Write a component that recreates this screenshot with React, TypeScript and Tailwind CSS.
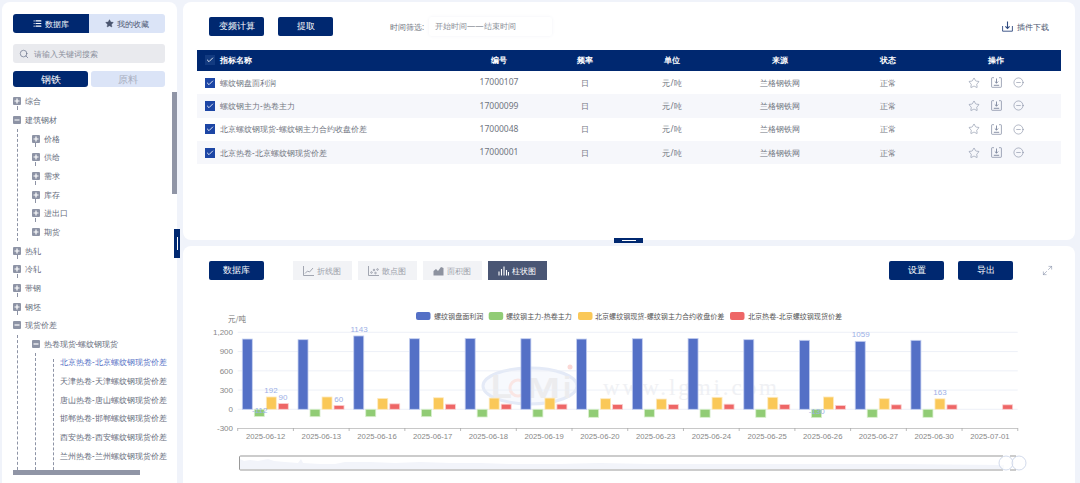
import React from "react";
import { Star, CircleMinus, Search, Check, List, Maximize2 } from "lucide-react";

const FONT = "[font-family:'Noto_Sans_CJK_SC','Noto_Sans',sans-serif]";

function Toggle({ open }: { open?: boolean }) {
  return (
    <svg width="8" height="8" viewBox="0 0 8 8" className="shrink-0">
      <rect width="8" height="8" rx="1" fill="#8d93a5" />
      <path d={open ? "M1.5 4H6.5" : "M1.5 4H6.5M4 1.5V6.5"} stroke="#fff" strokeWidth="1.2" />
    </svg>
  );
}

function Node({ label, open, dash = true }: { label: string; open?: boolean; dash?: boolean }) {
  return (
    <div className="relative flex h-[18.67px] items-center gap-[4px]">
      <Toggle open={open} />
      <span className="whitespace-nowrap">{label}</span>
      {dash && !open && (
        <span className="absolute left-[3.5px] top-[14px] h-[4px] border-l border-dashed border-[#8d93a5]" />
      )}
    </div>
  );
}

const leaves = [
  "北京热卷-北京螺纹钢现货价差",
  "天津热卷-天津螺纹钢现货价差",
  "唐山热卷-唐山螺纹钢现货价差",
  "邯郸热卷-邯郸螺纹钢现货价差",
  "西安热卷-西安螺纹钢现货价差",
  "兰州热卷-兰州螺纹钢现货价差",
];

function Sidebar() {
  return (
    <aside className="relative mt-[2px] ml-[2px] flex h-[481px] w-[175px] shrink-0 flex-col overflow-hidden rounded-t-lg bg-white px-[11px] pt-[12px]">
      <div className="flex h-[19px] w-[152px] shrink-0 overflow-hidden rounded-[3px] text-[8px]">
        <div className="flex w-[76px] items-center justify-center gap-[3px] bg-[#002870] text-white">
          <List size={9} strokeWidth={3} />
          数据库
        </div>
        <div className="flex w-[76px] items-center justify-center gap-[3px] bg-[#dbe4f7] text-[#4b5670]">
          <Star size={9} fill="#4b5670" strokeWidth={1} />
          我的收藏
        </div>
      </div>
      <div className="mt-[11px] flex h-[19px] w-[152px] shrink-0 items-center gap-[5px] rounded-[3px] bg-[#e9eaee] pl-[6px] text-[8px] text-[#8a8f9c]">
        <Search size={10} color="#5b6580" strokeWidth={1.5} />
        请输入关键词搜索
      </div>
      <div className="mt-[8px] flex h-[16px] w-[152px] shrink-0 justify-between text-[10px]">
        <div className="flex w-[75px] items-center justify-center rounded-[3px] bg-[#002870] text-white">钢铁</div>
        <div className="flex w-[74px] items-center justify-center rounded-[3px] bg-[#dbe4f7] text-[#a9afbf]">原料</div>
      </div>
      <div className="mt-[5px] w-[159px] overflow-hidden text-[8px] leading-none text-[#666c7c]">
        <Node label="综合" />
        <Node label="建筑钢材" open />
        <div className="ml-[4px] border-l border-dashed border-[#8d93a5] pl-[13.5px]">
          {["价格", "供给", "需求", "库存", "进出口"].map((t) => (
            <Node key={t} label={t} />
          ))}
          <Node label="期货" dash={false} />
        </div>
        <Node label="热轧" />
        <Node label="冷轧" />
        <Node label="带钢" />
        <Node label="钢坯" />
        <Node label="现货价差" open />
        <div className="ml-[4px] border-l border-dashed border-[#8d93a5] pl-[13.5px]">
          <Node label="热卷现货-螺纹钢现货" open />
          <div className="ml-[3.5px] border-l border-dashed border-[#8d93a5] pb-[10px] pl-[16.5px]">
            <div className="relative pl-[7.5px] text-[8.15px]">
              <span className="absolute top-[6px] bottom-[-10px] left-0 border-l border-dashed border-[#8d93a5]" />
              {leaves.map((t, i) => (
                <div
                  key={t}
                  className={`flex h-[18.67px] items-center whitespace-nowrap ${i === 0 ? "text-[#5470c6]" : ""}`}
                >
                  {t}
                </div>
              ))}
            </div>
          </div>
        </div>
      </div>
      <div className="absolute top-[90px] right-0 h-[102px] w-[5px] bg-[#9095a6]" />
      <div className="absolute top-[468px] left-[11px] h-[5px] w-[127px] bg-[#9095a6]" />
    </aside>
  );
}

function Btn({ children, w = "w-[55px]" }: { children: React.ReactNode; w?: string }) {
  return (
    <div className={`flex h-[19px] ${w} shrink-0 items-center justify-center rounded-[2px] bg-[#002870] text-[8.5px] text-white`}>
      {children}
    </div>
  );
}

function SaveIcon({ size = 11, color = "#7a849c" }: { size?: number; color?: string }) {
  return (
    <svg width={size} height={size} viewBox="0 0 11 11" fill="none" stroke={color} strokeWidth="0.7">
      <path d="M3 .7H1.2A.6.6 0 0 0 .6 1.3V9.7A.6.6 0 0 0 1.2 10.3H9.8A.6.6 0 0 0 10.4 9.7V1.3A.6.6 0 0 0 9.8 .7H8" />
      <path d="M5.5 1.5V6M3.8 4.5 5.5 6.2 7.2 4.5M2.8 8.3H8.2" strokeWidth="0.9" />
    </svg>
  );
}

function CheckBox({ head }: { head?: boolean }) {
  return (
    <div className={`flex h-[10px] w-[10px] shrink-0 items-center justify-center ${head ? "bg-[#123a80]" : "bg-[#1d46a5]"}`}>
      <Check size={8} color="#fff" strokeWidth={2.5} />
    </div>
  );
}

const GRID = "grid grid-cols-[260px_84px_88px_86px_130px_86px_130px] items-center";

const rows = [
  ["螺纹钢盘面利润", "17000107"],
  ["螺纹钢主力-热卷主力", "17000099"],
  ["北京螺纹钢现货-螺纹钢主力合约收盘价差", "17000048"],
  ["北京热卷-北京螺纹钢现货价差", "17000001"],
];

function SaveDownload() {
  return (
    <svg width="11" height="11" viewBox="0 0 11 11" fill="none" stroke="#2f4a80" strokeWidth="0.9">
      <path d="M.6 5V10.2H10.4V5" />
      <path d="M5.5 .5V7.5M3.4 5.4 5.5 7.5 7.6 5.4" strokeWidth="1.1" />
    </svg>
  );
}

function TopPanel() {
  return (
    <section className="h-[238px] shrink-0 rounded-lg bg-white px-[14px] pt-[15px]">
      <div className="flex h-[19px] items-center pl-[12px]">
        <Btn>变频计算</Btn>
        <div className="ml-[14px]"><Btn>提取</Btn></div>
        <span className="ml-[57px] w-[39px] text-[8px] whitespace-nowrap text-[#70757f]">时间筛选:</span>
        <div className="flex h-[19px] w-[123px] items-center rounded-[2px] pl-[6px] text-[8.3px] text-[#8b8f98] shadow-[0_0_3px_rgba(120,135,180,0.1)]">
          开始时间——结束时间
        </div>
        <div className="mr-[12px] ml-auto flex items-center gap-[4px] text-[8px] text-[#4b5670]">
          <SaveDownload />
          插件下载
        </div>
      </div>
      <div className={`${GRID} mt-[14px] h-[21px] bg-[#002870] text-center text-[8.2px] font-bold text-white`}>
        <div className="flex items-center gap-[5px] pl-[8px]">
          <CheckBox head />
          指标名称
        </div>
        <div>编号</div>
        <div>频率</div>
        <div>单位</div>
        <div>来源</div>
        <div>状态</div>
        <div>操作</div>
      </div>
      {rows.map(([name, id], i) => (
        <div
          key={id}
          className={`${GRID} h-[23.33px] text-center text-[8.2px] text-[#70757f] ${i % 2 === 1 ? "bg-[#f6f7fb]" : ""}`}
        >
          <div className="flex items-center gap-[5px] pl-[8px]">
            <CheckBox />
            {name}
          </div>
          <div className="text-[8.5px]">{id}</div>
          <div>日</div>
          <div>元/吨</div>
          <div>兰格钢铁网</div>
          <div>正常</div>
          <div className="flex items-center justify-center gap-[11px]">
            <Star size={12} color="#6b7690" strokeWidth={1} />
            <SaveIcon />
            <CircleMinus size={11} color="#5f6a85" strokeWidth={1} />
          </div>
        </div>
      ))}
    </section>
  );
}

function ChartIcon({ kind, color }: { kind: string; color: string }) {
  const common = { width: 11, height: 10, viewBox: "0 0 11 10", fill: "none", stroke: color, strokeWidth: 0.8 };
  if (kind === "line")
    return (
      <svg {...common}>
        <path d="M.5 0V9.5H11" />
        <path d="M2 7.5 4.5 5 6.5 6 10 2" />
      </svg>
    );
  if (kind === "dot")
    return (
      <svg {...common}>
        <path d="M.5 0V9.5H11" />
        <circle cx="3.5" cy="6.5" r=".8" />
        <circle cx="6" cy="4" r=".8" />
        <circle cx="7.5" cy="7" r=".8" />
        <circle cx="9.5" cy="3.5" r=".8" />
      </svg>
    );
  if (kind === "area")
    return (
      <svg {...common} stroke="none" fill={color}>
        <path d="M.5 9.5V5L3 3 5 5 8 1 10.5 2V9.5Z" />
      </svg>
    );
  return (
    <svg {...common} strokeWidth="1.1">
      <path d="M1 9.5V5.5M3.5 9.5V3M6 9.5V.5M8.5 9.5V4M10.5 9.5V6" />
    </svg>
  );
}

const tabs = [
  ["line", "折线图"],
  ["dot", "散点图"],
  ["area", "面积图"],
  ["bar", "柱状图"],
];

const dates = [
  "2025-06-12", "2025-06-13", "2025-06-16", "2025-06-17", "2025-06-18", "2025-06-19", "2025-06-20",
  "2025-06-23", "2025-06-24", "2025-06-25", "2025-06-26", "2025-06-27", "2025-06-30", "2025-07-01",
];
const blue = [1095, 1085, 1143, 1100, 1105, 1100, 1095, 1100, 1105, 1085, 1075, 1059, 1075, 0];
const green = [-112, -115, -115, -115, -120, -120, -125, -120, -125, -125, -130, -125, -125, 0];
const yellow = [192, 192, 170, 180, 175, 175, 165, 160, 187, 187, 192, 165, 163, 0];
const red = [90, 60, 85, 80, 80, 80, 75, 75, 80, 75, 60, 70, 70, 70];
const series: [number[], string, string, number][] = [
  [blue, "#5470c6", "#c4cff0", 4.6],
  [green, "#91cc75", "#d8efcc", 16.6],
  [yellow, "#fac858", "#fdeac0", 28.6],
  [red, "#ee6666", "#fad0d0", 40.6],
];
const X0 = 237.7;
const CW = 55.72;
const Y0 = 409.3;
const K = 77 / 1200;
const labels: [string, number, number][] = [
  ["192", 271, 393],
  ["90", 283, 400],
  ["-112", 259.7, 413],
  ["60", 338.7, 402],
  ["1143", 359, 332],
  ["1059", 860.7, 337],
  ["163", 940, 395],
  ["-130", 816.7, 414],
];
const legend: [string, string, number, number][] = [
  ["螺纹钢盘面利润", "#5470c6", 416, 434],
  ["螺纹钢主力-热卷主力", "#91cc75", 488.7, 506],
  ["北京螺纹钢现货-螺纹钢主力合约收盘价差", "#fac858", 578, 595],
  ["北京热卷-北京螺纹钢现货价差", "#ee6666", 730, 748],
];

function Chart() {
  // The drawing keeps page coordinates: viewBox starts at the panel's chart area.
  return (
    <svg
      width="892"
      height="174"
      viewBox="183 309 892 174"
      className="block"
      style={{ fontFamily: "'Liberation Sans','Noto Sans CJK SC',sans-serif" }}
    >
      {/* watermark */}
      <g>
        <ellipse cx="530" cy="386" rx="47" ry="18" fill="#f7f9fd" stroke="#e4eaf7" strokeWidth="3" />
        <text x="491" y="398" fontSize="34" fontWeight="700" fill="#ececee">L</text>
        <circle cx="518" cy="388" r="8" fill="none" stroke="#fae6e4" strokeWidth="3" />
        <text x="526" y="398" fontSize="30" fontWeight="700" fill="#ececee" textLength="34" lengthAdjust="spacingAndGlyphs">M</text>
        <text x="563" y="398" fontSize="30" fontWeight="700" fill="#ececee">i</text>
        <circle cx="570" cy="367" r="2.5" fill="#fbd9d6" />
        <text x="603" y="395" fontSize="23" textLength="174" fill="#f0f1f4" fontFamily="'Liberation Serif',serif">www.lgmi.com</text>
      </g>
      <text x="228" y="322" fontSize="7.5" fill="#777" fontFamily="'Noto Sans CJK SC',sans-serif">元/吨</text>
      {[1200, 900, 600, 300, 0, -300].map((v) => {
        const y = Y0 - v * K;
        return (
          <g key={v}>
            {v !== -300 && <line x1={X0} x2="1017.7" y1={y} y2={y} stroke="#e9ecf6" strokeWidth="0.8" />}
            <text x="233" y={y + 2.8} fontSize="8" textAnchor="end" fill="#888">
              {v === 1200 ? "1,200" : v}
            </text>
          </g>
        );
      })}
      {series.map(([vals, fill, edge, off]) =>
        vals.map((v, i) =>
          v === 0 ? null : (
            <rect
              key={fill + i}
              x={X0 + CW * i + off}
              y={v > 0 ? Y0 - v * K : Y0}
              width="10"
              height={Math.abs(v) * K}
              fill={fill}
              stroke={edge}
              strokeWidth="0.8"
            />
          ),
        ),
      )}
      <line x1={X0} x2="1017.7" y1="428.5" y2="428.5" stroke="#c8c8c8" />
      {Array.from({ length: 15 }).map((_, i) => (
        <line key={i} x1={X0 + CW * i} x2={X0 + CW * i} y1="428" y2="431" stroke="#aaa" strokeWidth="0.8" />
      ))}
      {dates.map((d, i) => (
        <text key={d} x={X0 + CW * i + CW / 2} y="439" fontSize="7.7" textAnchor="middle" fill="#888">
          {d}
        </text>
      ))}
      {labels.map(([t, x, y]) => (
        <text key={t} x={x} y={y} fontSize="8" textAnchor="middle" fill="#9db0e6">
          {t}
        </text>
      ))}
      {legend.map(([t, c, rx, tx]) => (
        <g key={t}>
          <rect x={rx} y="312" width="14.5" height="8" rx="2" fill={c} />
          <text x={tx} y="318.6" fontSize="7.05" fill="#555" fontFamily="'Noto Sans CJK SC',sans-serif">
            {t}
          </text>
        </g>
      ))}
      {/* data zoom */}
      <path
        d="M240 469V459L244 461 250 460 258 461 268 459 274 461 285 462 298 463 301 459 303 463 320 464 335 464 345 462 370 462 395 463 420 462 450 463 480 463 510 464 560 464 600 463 650 464 700 464 760 464 830 464 900 464 1004 465V469Z"
        fill="#f2f4fa"
      />
      <path d="M1003 456H240.5Q239.5 456 239.5 457V469Q239.5 470 240.5 470H1003" fill="none" stroke="#999" strokeWidth="1" />
      <circle cx="1006" cy="463" r="7" fill="#fff" fillOpacity="0.6" stroke="#c6d0e6" strokeWidth="0.8" />
      <circle cx="1019" cy="463" r="7" fill="#fff" fillOpacity="0.6" stroke="#c6d0e6" strokeWidth="0.8" />
      <path d="M1010 456H1016M1010 470H1016" stroke="#999" />
    </svg>
  );
}

function BottomPanel() {
  return (
    <section className="mt-[6px] flex h-[237px] shrink-0 flex-col overflow-hidden rounded-t-lg bg-white">
      <div className="flex h-[63px] shrink-0 items-start pt-[15px] pl-[26px]">
        <Btn>数据库</Btn>
        <div className="ml-[29px] flex gap-[6.5px]">
          {tabs.map(([k, t]) => {
            const on = k === "bar";
            return (
              <div
                key={k}
                className={`flex h-[19px] w-[58.5px] items-center justify-center gap-[3px] text-[8px] ${on ? "bg-[#4a5674] text-white" : "bg-[#f2f3f6] text-[#9a9ea9]"}`}
              >
                <ChartIcon kind={k} color={on ? "#ffffff" : "#8d929f"} />
                {t}
              </div>
            );
          })}
        </div>
        <div className="ml-auto flex gap-[14px]">
          <Btn>设置</Btn>
          <Btn>导出</Btn>
        </div>
        <div className="mr-[22px] ml-[29px] flex h-[19px] items-center text-[#7f8aa3]">
          <Maximize2 size={11} strokeWidth={1.2} />
        </div>
      </div>
      <Chart />
    </section>
  );
}

export default function App() {
  return (
    <div className={`relative flex h-[483px] w-[1080px] overflow-hidden bg-[#f0f3fa] ${FONT}`}>
      <Sidebar />
      <main className="mt-[2px] ml-[6px] flex w-[892px] shrink-0 flex-col">
        <TopPanel />
        <BottomPanel />
      </main>
      {/* drag handles that sit over the gaps */}
      <div className="absolute top-[229px] left-[174px] flex h-[29px] w-[6px] items-center justify-center bg-[#002870]">
        <div className="h-[13px] w-[1px] bg-white" />
      </div>
      <div className="absolute top-[238px] left-[614px] flex h-[5px] w-[29px] items-center justify-center bg-[#002870]">
        <div className="h-[1px] w-[14px] bg-white" />
      </div>
    </div>
  );
}
